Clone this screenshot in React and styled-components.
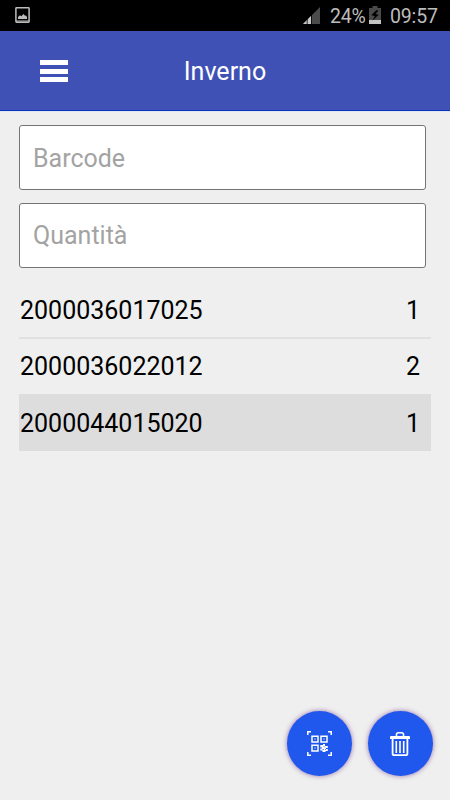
import React from 'react';
import styled, { createGlobalStyle } from 'styled-components';

const GlobalStyle = createGlobalStyle`
  * { box-sizing: border-box; }
  body { margin: 0; background: #efefef; font-family: Roboto, "Liberation Sans", sans-serif; }
`;

const Screen = styled.div`
  position: relative;
  display: flex;
  flex-direction: column;
  width: 450px;
  height: 800px;
  background: #efefef;
  overflow: hidden;
`;

const StatusBar = styled.div`
  display: flex;
  align-items: flex-start;
  justify-content: space-between;
  height: 31px;
  padding: 0 13px 0 15px;
  background: #000;
  color: #bdbdbd;
  font-size: 19.5px;
  line-height: 33px;
`;

const StatusGroup = styled.div`
  display: flex;
  align-items: flex-start;
`;

const Glyph = styled.svg`
  display: block;
  flex: none;
  margin: ${(p) => p.$margin || '0'};
`;

const StatusText = styled.span`
  width: ${(p) => p.$width}px;
  white-space: nowrap;
  letter-spacing: -0.15px;
`;

const Header = styled.header`
  display: grid;
  grid-template-columns: 108px 1fr 108px;
  align-items: center;
  height: 80px;
  background: #3f51b5;
  border-bottom: 1px solid #0b35b8;
  box-shadow: 0 1px 0 #e2e5f3;
`;

const MenuButton = styled.button`
  display: flex;
  flex-direction: column;
  justify-content: center;
  gap: 3.5px;
  height: 40px;
  margin: 1px 0 0;
  padding: 0 40px;
  border: 0;
  background: none;
`;

const MenuLine = styled.span`
  width: 28px;
  height: 5px;
  background: #fff;
`;

const Title = styled.h1`
  margin: 3px 0 0;
  color: #fff;
  font-size: 25px;
  font-weight: 400;
  line-height: 30px;
  text-align: center;
`;

const Form = styled.form`
  display: flex;
  flex-direction: column;
  gap: 13px;
  padding: 14px 24px 0 19px;
`;

const Field = styled.input`
  width: 407px;
  height: 65px;
  padding: ${(p) => (p.$raised ? '0 13px 1px' : '1px 13px 0')};
  border: 1px solid #747474;
  border-radius: 3px;
  background: #fff;
  font-family: inherit;
  font-size: 25px;
  outline: none;
  &::placeholder { color: #a3a3a3; opacity: 1; }
`;

const List = styled.ul`
  margin: 14px 19px 0;
  padding: 0;
  list-style: none;
`;

const Row = styled.li`
  display: flex;
  justify-content: space-between;
  align-items: center;
  height: ${(p) => (p.$divided || p.$selected ? 57 : 55)}px;
  padding: ${(p) => (p.$divided ? 3 : p.$selected ? 2 : 0)}px 11px 0 1px;
  border-bottom: ${(p) => (p.$divided ? '2px solid #e1e1e1' : '0')};
  background: ${(p) => (p.$selected ? '#dddddd' : 'transparent')};
  color: #000;
  font-size: 25px;
  line-height: 30px;
`;

const Actions = styled.div`
  position: absolute;
  right: 17.5px;
  bottom: 24px;
  display: flex;
  gap: 16px;
`;

const ActionButton = styled.button`
  display: flex;
  align-items: center;
  justify-content: center;
  width: 65px;
  height: 65px;
  padding: 0;
  border: 0;
  border-radius: 50%;
  background: #2058ed;
  color: #fff;
  box-shadow: 0 0 5px rgba(90, 30, 130, 0.6);
`;

const PictureIcon = () => (
  <Glyph $margin="7px 0 0" width="15" height="16" viewBox="0 0 15 16">
    <rect x="0.9" y="0.8" width="13.2" height="14.4" rx="0.6" fill="none" stroke="#bdbdbd" strokeWidth="1.5" />
    <path d="M3 12V10L5 8.3L6.3 9.3L8.5 7L10 8.7L11 8.5L12 10V12Z" fill="#bdbdbd" />
    <path d="M1 14H14" stroke="#bdbdbd" strokeWidth="1" />
  </Glyph>
);

const SignalIcon = () => (
  <Glyph $margin="7px 9px 0 0" width="18" height="17" viewBox="0 0 18 17">
    <path d="M0 17L17 0V17Z" fill="#4b4b4b" />
    <path d="M0 17L8 9V17Z" fill="#c9c9c9" />
    <path d="M4.2 12V17M8.5 8V17" stroke="#000" strokeWidth="0.8" />
  </Glyph>
);

const BatteryIcon = () => (
  <Glyph $margin="6px 9px 0 0" width="12" height="18" viewBox="0 0 12 18">
    <path d="M0 2H3.5V0H8.5V2H12V14H0Z" fill="#4a4a4a" />
    <path d="M0 14H12V18H0Z" fill="#c4c4c4" />
    <path d="M7.5 4L2.3 9.2L5.8 10L3.5 14.5L9.7 8.7L6.5 8L9.5 4.8Z" fill="#000" />
  </Glyph>
);

const ScanIcon = () => (
  <svg width="25" height="25" viewBox="0 0 25 25" fill="none" stroke="currentColor">
    <path d="M0.8 4V0.8H4M21 0.8H24.2V4M0.8 21V24.2H4M21 24.2H24.2V21" strokeWidth="1.5" />
    <path d="M5 5.2H11V11H5ZM14 5.2H20V11H14ZM5 14.2H11V20H5Z" strokeWidth="1.5" />
    <path d="M7.2 7.2H8.8V8.8H7.2ZM16.2 7.2H17.8V8.8H16.2ZM7.2 16.2H8.8V17.8H7.2Z" fill="currentColor" stroke="none" opacity="0.5" />
    <path d="M14 14H16V13H18V15H20.8V17H19V18H20.8V20H18.5V21H15.5V19.5H13.3V17.5H15V16.5H13.3V14Z" fill="currentColor" stroke="none" />
    <path d="M16.5 15L18 16.5M15.5 18.5H17M18 18L19 19" stroke="#2058ed" strokeWidth="0.7" />
  </svg>
);

const TrashIcon = () => (
  <svg width="22" height="26" viewBox="0 0 22 26" fill="none" stroke="currentColor">
    <path d="M7.5 5V3.5Q7.5 1.7 9.3 1.7H12.7Q14.5 1.7 14.5 3.5V5" strokeWidth="1.6" />
    <path d="M1 5.8Q1 5 2 5H20Q21 5 21 5.8V8H1Z" fill="currentColor" stroke="none" />
    <path d="M3.6 7V22.4Q3.6 24.2 5.4 24.2H16.6Q18.4 24.2 18.4 22.4V7" strokeWidth="1.8" />
    <path d="M7.3 10V22M11 10V22M14.7 10V22" strokeWidth="1.6" />
  </svg>
);

const entries = [
  { code: '2000036017025', quantity: 1, divided: true },
  { code: '2000036022012', quantity: 2 },
  { code: '2000044015020', quantity: 1, selected: true },
];

export default function App() {
  return (
    <>
      <GlobalStyle />
      <Screen>
        <StatusBar>
          <PictureIcon />
          <StatusGroup>
            <SignalIcon />
            <StatusText $width={39}>24%</StatusText>
            <BatteryIcon />
            <StatusText $width={47}>09:57</StatusText>
          </StatusGroup>
        </StatusBar>
        <Header>
          <MenuButton aria-label="Menu">
            <MenuLine />
            <MenuLine />
            <MenuLine />
          </MenuButton>
          <Title>Inverno</Title>
        </Header>
        <Form>
          <Field placeholder="Barcode" />
          <Field placeholder="Quantità" $raised />
        </Form>
        <List>
          {entries.map((entry) => (
            <Row key={entry.code} $divided={entry.divided} $selected={entry.selected}>
              <span>{entry.code}</span>
              <span>{entry.quantity}</span>
            </Row>
          ))}
        </List>
        <Actions>
          <ActionButton aria-label="Scan"><ScanIcon /></ActionButton>
          <ActionButton aria-label="Delete"><TrashIcon /></ActionButton>
        </Actions>
      </Screen>
    </>
  );
}
